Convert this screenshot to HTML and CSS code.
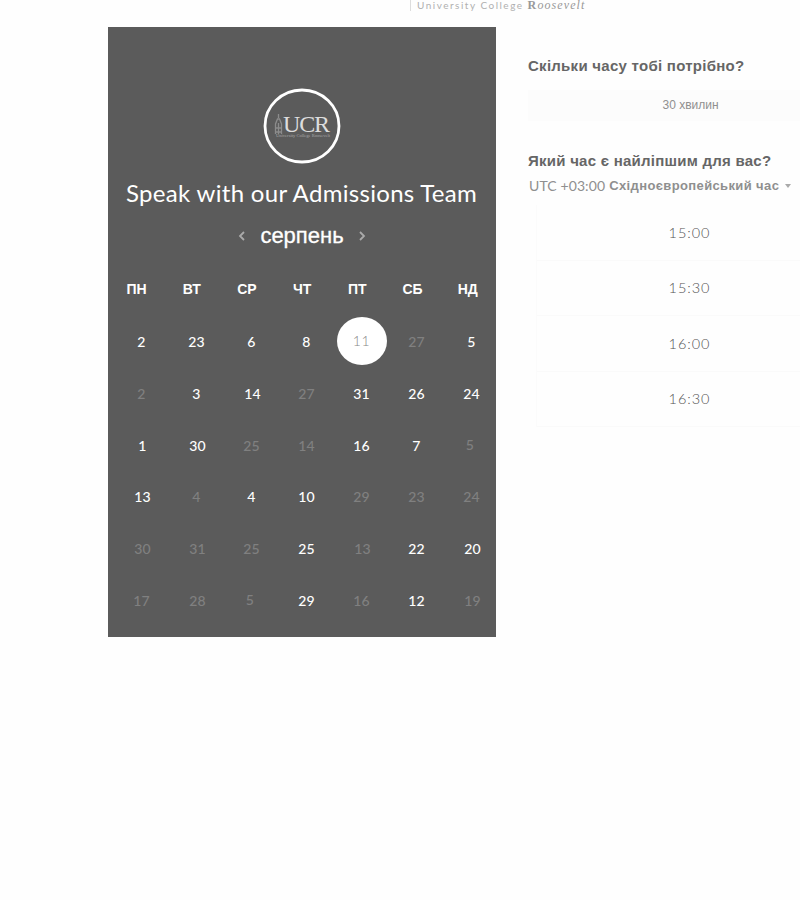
FILE: index.html
```html
<!DOCTYPE html>
<html lang="uk">
<head>
<meta charset="utf-8">
<title>Speak with our Admissions Team</title>
<link rel="stylesheet" href="styles.css">
</head>
<body>
<header class="brand"><span class="brand-text">University College <span class="brand-name"><b>R</b><i>oosevelt</i></span></span></header>
<main class="booking">
  <section class="calendar">
    <svg class="logo" viewBox="0 0 78 76" width="78" height="76">
      <ellipse cx="39" cy="38" rx="37" ry="36" fill="none" stroke="#fff" stroke-width="2.8"/>
      <path d="M15.500 30v-4M12.500 46V36l2-5h2l2 5v10M15.500 35v11M12 40h7M12 44h7" fill="none" stroke="#8c8c8c" stroke-width="1.300"/>
      <text class="logo-main" x="20" y="44" textLength="47">UCR</text>
      <text class="logo-sub" x="13" y="49" textLength="54">University College Roosevelt</text>
    </svg>
    <h1 class="title"><span>Speak with our Admissions Team</span></h1>
    <div class="month">
      <svg width="8" height="12" viewBox="0 0 8 12"><path d="M6 2 2 6l4 4"/></svg>
      <span class="month-name">серпень</span>
      <svg width="8" height="12" viewBox="0 0 8 12"><path d="m2 2 4 4-4 4"/></svg>
    </div>
    <div class="weekdays"><span>ПН</span><span>ВТ</span><span>СР</span><span>ЧТ</span><span>ПТ</span><span>СБ</span><span>НД</span></div>
    <div class="days">
      <span>2</span><span>23</span><span>6</span><span>8</span><span class="selected">11</span><span class="off">27</span><span>5</span>
      <span class="off">2</span><span>3</span><span class="right">14</span><span class="off">27</span><span>31</span><span>26</span><span>24</span>
      <span class="right">1</span><span class="right">30</span><span class="off">25</span><span class="off">14</span><span>16</span><span>7</span><span class="off raised">5</span>
      <span class="right">13</span><span class="off">4</span><span>4</span><span>10</span><span class="off">29</span><span class="off">23</span><span class="off">24</span>
      <span class="off right">30</span><span class="off right">31</span><span class="off">25</span><span>25</span><span class="off right">13</span><span>22</span><span class="right">20</span>
      <span class="off">17</span><span class="off right">28</span><span class="off raised">5</span><span>29</span><span class="off">16</span><span>12</span><span class="off right">19</span>
    </div>
  </section>
  <section class="options">
    <h2><span class="q1">Скільки часу тобі потрібно?</span></h2>
    <div class="duration"><span>30 хвилин</span></div>
    <h2><span class="q2">Який час є найліпшим для вас?</span></h2>
    <div class="zone"><span class="utc">UTC +03:00</span><b>Східноєвропейський час</b><i class="caret"></i></div>
    <div class="slots"><span>15:00</span><span>15:30</span><span>16:00</span><span>16:30</span></div>
  </section>
</main>
</body>
</html>
```
FILE: styles.css
```css
* { box-sizing: border-box; }
body { margin: 0; width: 800px; height: 900px; overflow: hidden; background: #fefefe; font-family: Lato, "Liberation Sans", sans-serif; }
.brand { display: flow-root; height: 26.5px; padding-left: 410px; color: #b0b0b0; font-size: 10px; line-height: 12px; white-space: nowrap; }
.brand-text { display: block; height: 12px; margin-top: -1px; padding-left: 6px; border-left: 1px solid #ddd; letter-spacing: 1.5px; }
.brand-name { font-family: "Liberation Serif", serif; font-size: 12px; line-height: 10px; letter-spacing: 1.1px; color: #999; }
.booking { display: flex; padding-left: 108px; }
.calendar { flex: none; width: 388px; height: 610px; padding-top: 61.5px; background: #5b5b5b; color: #fff; }
.logo { display: block; margin: 0 0 0 155px; }
.logo-main { font-family: "Liberation Serif", serif; font-size: 24px; fill: #ddd; }
.logo-sub { font-family: "Liberation Serif", serif; font-size: 4.5px; fill: #aaa; }
.title { margin: 11px 0 0; padding-left: 18px; font-size: 24px; line-height: 36px; font-weight: 400; letter-spacing: .31px; white-space: nowrap; }
.month { display: flex; align-items: center; justify-content: center; gap: 14px; height: 50px; }
.month svg { fill: none; stroke: #aaa; stroke-width: 1.8; }
.month-name { font: 22px/30px "Liberation Sans", sans-serif; -webkit-text-stroke: .3px #fff; }
.weekdays, .days { display: grid; grid-template-columns: repeat(7, 55px); justify-items: center; }
.weekdays { grid-template-columns: repeat(7, 55.2px); margin-left: 1px; padding-top: 18px; font: bold 14px/20px "Liberation Sans", sans-serif; height: 55px; }
.days { margin-left: 6px; grid-auto-rows: 51.7px; align-items: center; font-size: 14px; font-weight: 500; letter-spacing: .2px; }
.off { color: #808080; }
.right { transform: translateX(1px); }
.raised { transform: translate(-1.5px, -1px); }
.selected { display: flex; align-items: center; justify-content: center; width: 50px; height: 48px; border-radius: 50%; background: #fff; color: #888; font-weight: 300; letter-spacing: .6px; transform: translateY(-1px); }
.options { flex: 1; min-width: 0; padding-left: 32px; padding-top: 28.5px; color: #666; white-space: nowrap; }
h2 { margin: 0; font: bold 15px/22px "Liberation Sans", sans-serif; }
.q1 { letter-spacing: .27px; }
.q2 { letter-spacing: .25px; }
.duration { margin: 13px 0 29px; padding-left: 53px; height: 31px; background: #fcfcfc; text-align: center; font: 12px/31px "Liberation Sans", sans-serif; color: #909090; }
.zone { display: flex; align-items: center; height: 27px; padding-left: 1px; color: #8f8f8f; font-size: 14px; }
.utc { margin-right: 4px; letter-spacing: .1px; }
.zone b { font: bold 13px/20px "Liberation Sans", sans-serif; letter-spacing: .38px; }
.caret { margin-left: 6px; border: 3.5px solid transparent; border-top: 4px solid #aaa; border-bottom: 0; }
.slots { display: grid; grid-auto-rows: 55.5px; margin-top: 6px; margin-left: 8px; }
.slots span { display: flex; align-items: center; justify-content: center; padding-left: 42px; border-left: 1px solid #fbfbfb; border-bottom: 1px solid #fafafa; font-size: 14.5px; font-weight: 300; letter-spacing: .95px; color: #555; }
```
